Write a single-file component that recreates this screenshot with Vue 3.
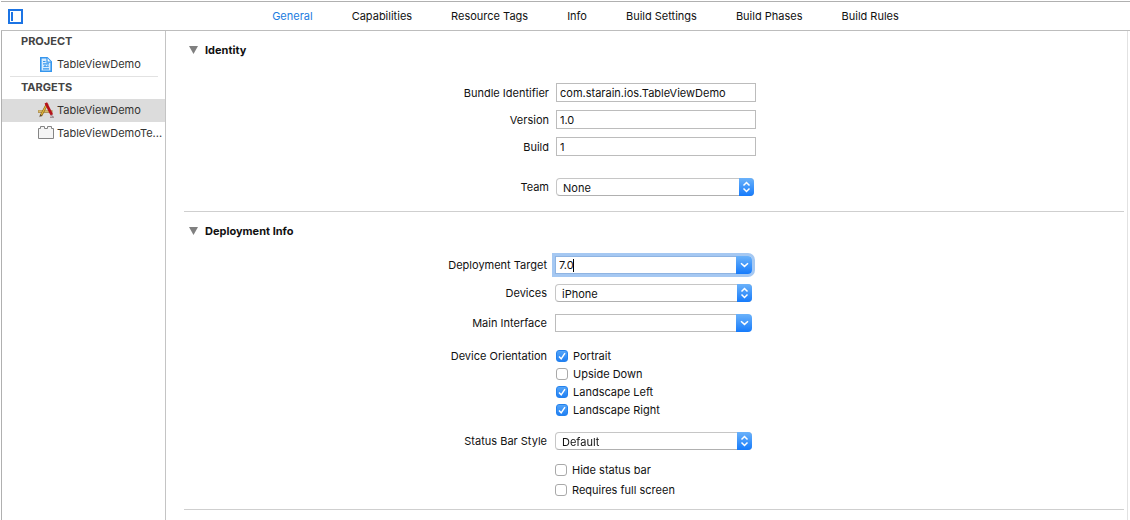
<script setup>
import { ref, onMounted } from 'vue'

const tabs = ['General', 'Capabilities', 'Resource Tags', 'Info', 'Build Settings', 'Build Phases', 'Build Rules']
const activeTab = ref('General')

const identity = ref([
  { id: 'bundle', label: 'Bundle Identifier', value: 'com.starain.ios.TableViewDemo' },
  { id: 'version', label: 'Version', value: '1.0' },
  { id: 'build', label: 'Build', value: '1' }
])
const team = ref('None')
const target = ref('7.0')
const devices = ref('iPhone')
const mainInterface = ref('')
const orientations = ref([
  { label: 'Portrait', on: true },
  { label: 'Upside Down', on: false },
  { label: 'Landscape Left', on: true },
  { label: 'Landscape Right', on: true }
])
const statusStyle = ref('Default')
const statusOptions = ref([
  { label: 'Hide status bar', on: false },
  { label: 'Requires full screen', on: false }
])

// A steady caret marks the field until the user starts editing it.
const restingCaret = ref(true)
const targetInput = ref(null)
onMounted(() => {
  const el = targetInput.value
  el.focus()
  el.setSelectionRange(el.value.length, el.value.length)
})
</script>

<template>
  <div class="editor">
    <header class="topbar">
      <button class="toggle" type="button" aria-label="Toggle project list">
        <svg width="15" height="15" viewBox="0 0 15 15">
          <rect x="1" y="1" width="13" height="13" fill="#fff" stroke="#1c74e4" stroke-width="2" />
          <rect x="3" y="3" width="2" height="9" fill="#1c74e4" />
        </svg>
      </button>
      <nav class="tabs">
        <button
          v-for="tab in tabs"
          :key="tab"
          type="button"
          class="tab"
          :class="{ active: tab === activeTab }"
          @click="activeTab = tab"
        >{{ tab }}</button>
      </nav>
    </header>

    <div class="body">
      <aside class="sidebar">
        <h2 class="group">PROJECT</h2>
        <a class="item" href="#project">
          <svg class="glyph" width="16" height="16" viewBox="0 0 16 16">
            <path d="M2.8 1.8h6.4l4 4v9.4H2.8z" fill="#d9ecfd" stroke="#3596ee" stroke-width="1.6" />
            <path d="M9 1.8v4.4h4.2" fill="#fff" stroke="#3596ee" stroke-width="1.2" />
            <path d="M5 5.5h2.5M5 7.8h6M5 12.8h6" stroke="#3596ee" stroke-width="1.2" />
            <path d="M5 10.9l2-2 1.6 1.4L10 9l1 1.8z" fill="#3596ee" />
          </svg>
          <span>TableViewDemo</span>
        </a>
        <hr class="line" />
        <h2 class="group">TARGETS</h2>
        <a class="item selected" href="#app-target">
          <svg class="glyph" width="16" height="16" viewBox="0 0 16 16">
            <path d="M0 9.5h14.5" stroke="#a8843c" stroke-width="2.6" />
            <path d="M.5 9.2h13" stroke="#ecd584" stroke-width="1" />
            <path d="M9.4 1.5L2.8 14" stroke="#8c6a22" stroke-width="2.6" />
            <path d="M9.2 2L3.2 13" stroke="#e6b93a" stroke-width="1.2" />
            <path d="M2.2 12.2l-.8 3 2.8-2z" fill="#5a4630" />
            <path d="M7.8 .8l6 12" stroke="#b5121b" stroke-width="2.8" />
            <path d="M13 12.6l2 2.2M12 15.2h4" stroke="#8b7479" stroke-width="1" />
          </svg>
          <span>TableViewDemo</span>
        </a>
        <a class="item" href="#test-target">
          <svg class="glyph" width="16" height="16" viewBox="0 0 16 16">
            <path d="M.5 3.5h2v-2h4v2h3v-2h4v2h2v10H.5z" fill="#f5f5f5" stroke="#858585" />
          </svg>
          <span>TableViewDemoTe...</span>
        </a>
      </aside>

      <main class="content">
        <section class="section identity">
          <h3 class="title">
            <svg width="9" height="8" viewBox="0 0 9 8"><path d="M0 0h9L4.5 8z" fill="#808080" /></svg>
            Identity
          </h3>
          <div v-for="f in identity" :key="f.id" class="row">
            <label class="label" :for="f.id">{{ f.label }}</label>
            <input :id="f.id" v-model="f.value" class="text" type="text" spellcheck="false" />
          </div>
          <div class="row team">
            <label class="label" for="team">Team</label>
            <div class="picker">
              <select id="team" v-model="team"><option>None</option></select>
              <span class="cap">
                <svg width="9" height="12" viewBox="0 0 9 12"><path d="M1.5 4.5l3-3 3 3M1.5 7.5l3 3 3-3" /></svg>
              </span>
            </div>
          </div>
        </section>

        <section class="section deployment">
          <h3 class="title">
            <svg width="9" height="8" viewBox="0 0 9 8"><path d="M0 0h9L4.5 8z" fill="#808080" /></svg>
            Deployment Info
          </h3>
          <div class="row">
            <label class="label" for="target">Deployment Target</label>
            <div class="combo focused" :class="{ resting: restingCaret }">
              <input id="target" ref="targetInput" v-model="target" type="text" @input="restingCaret = false" />
              <span v-if="restingCaret" class="caret"></span>
              <button type="button" class="drop" aria-label="Show deployment targets">
                <svg width="9" height="6" viewBox="0 0 9 6"><path d="M1 1.2l3.5 3.2L8 1.2" /></svg>
              </button>
            </div>
          </div>
          <div class="row devices">
            <label class="label" for="devices">Devices</label>
            <div class="picker">
              <select id="devices" v-model="devices"><option>iPhone</option></select>
              <span class="cap">
                <svg width="9" height="12" viewBox="0 0 9 12"><path d="M1.5 4.5l3-3 3 3M1.5 7.5l3 3 3-3" /></svg>
              </span>
            </div>
          </div>
          <div class="row interface">
            <label class="label" for="interface">Main Interface</label>
            <div class="combo">
              <input id="interface" v-model="mainInterface" type="text" />
              <button type="button" class="drop" aria-label="Show interfaces">
                <svg width="9" height="6" viewBox="0 0 9 6"><path d="M1 1.2l3.5 3.2L8 1.2" /></svg>
              </button>
            </div>
          </div>
          <div class="row orientation" role="group" aria-labelledby="orientation">
            <span id="orientation" class="label">Device Orientation</span>
            <div class="checks">
              <label v-for="o in orientations" :key="o.label" class="check">
                <span class="box">
                  <input v-model="o.on" type="checkbox" />
                  <svg v-if="o.on" width="12" height="12" viewBox="0 0 12 12"><path d="M3 6.4l2.2 2.4L9 3.2" /></svg>
                </span>
                {{ o.label }}
              </label>
            </div>
          </div>
          <div class="row status">
            <label class="label" for="status">Status Bar Style</label>
            <div class="picker">
              <select id="status" v-model="statusStyle"><option>Default</option></select>
              <span class="cap">
                <svg width="9" height="12" viewBox="0 0 9 12"><path d="M1.5 4.5l3-3 3 3M1.5 7.5l3 3 3-3" /></svg>
              </span>
            </div>
          </div>
          <div class="row options">
            <div class="checks loose">
              <label v-for="o in statusOptions" :key="o.label" class="check">
                <span class="box">
                  <input v-model="o.on" type="checkbox" />
                  <svg v-if="o.on" width="12" height="12" viewBox="0 0 12 12"><path d="M3 6.4l2.2 2.4L9 3.2" /></svg>
                </span>
                {{ o.label }}
              </label>
            </div>
          </div>
        </section>
      </main>
    </div>
  </div>
</template>

<style>
html, body { background: #fff; }
body { margin: 0; }
</style>

<style scoped>
.editor, .editor * { box-sizing: border-box; }
.editor {
  display: flex;
  flex-direction: column;
  min-height: 100vh;
  padding: 1px 0 0 1px;
  background: #fff;
  color: #111;
  font: 11px/18px Inter, "Liberation Sans", sans-serif;
}
button, input, select { font: inherit; color: inherit; margin: 0; }
button { border: 0; padding: 0; background: none; }
svg { display: block; flex: none; }

.topbar {
  display: flex;
  align-items: center;
  height: 30px;
  border-top: 1px solid #b0b0b0;
  border-bottom: 1px solid #bdbdbd;
}
.toggle { width: 40px; padding-left: 7px; }
.tabs { flex: 1; display: flex; justify-content: center; gap: 39px; }
.tab.active { color: #1c7ce0; }

.body { flex: 1; display: flex; border-left: 1px solid #b0b0b0; }
.sidebar { width: 164px; border-right: 1px solid #c4c4c4; color: #333; }
.group {
  height: 23px;
  margin: 0;
  padding-left: 19px;
  font-size: 11px;
  font-weight: 700;
  line-height: 22px;
  color: #444;
}
.group:first-child { margin-top: -1px; }
.item {
  display: flex;
  align-items: center;
  gap: 3px;
  height: 23px;
  padding: 0 0 2px 36px;
  color: inherit;
  text-decoration: none;
  white-space: nowrap;
}
.item.selected { background: #dcdcdc; }
.line { height: 1px; margin: 0 7px -1px 8px; border: 0; background: #e2e2e2; }

.content { flex: 1; margin-right: 2px; padding: 0 3px 0 18px; border-right: 1px solid #e2e2e2; }
.section { padding-bottom: 15px; border-bottom: 1px solid #cfcfcf; }
.deployment { padding-bottom: 10px; }
.title {
  display: flex;
  align-items: center;
  gap: 7px;
  margin: 0;
  padding: 10px 0 24px 5px;
  font-size: 11px;
  font-weight: 700;
  line-height: 18px;
  color: #111;
}
.deployment .title { padding-bottom: 16px; }

.row { display: grid; grid-template-columns: calc(50% - 107px) 197px; column-gap: 8px; }
.identity .row { grid-template-columns: calc(50% - 105px) 200px; column-gap: 7px; margin-bottom: 8px; }
.identity .row .label { line-height: 20px; margin-bottom: -1px; }
.identity .team { margin: 22px 0 0; }
.identity .team .label { line-height: 18px; margin-bottom: 0; }
.devices { margin-top: 10px; }
.interface { margin-top: 12px; }
.orientation { margin-top: 15px; }
.status { margin-top: 13px; }
.options { margin-top: 11px; }
.options .checks { grid-column: 2; }
.label { text-align: right; white-space: nowrap; }

.text {
  width: 100%;
  height: 19px;
  padding: 0 3px;
  border: 1px solid #bcbcbc;
  background: #fff;
  outline: 0;
}
.picker { position: relative; height: 18px; }
.identity .picker { width: 198px; }
.picker select {
  appearance: none;
  display: block;
  width: 100%;
  height: 18px;
  padding: 0 20px 2px 6px;
  border: 1px solid #c6c6c6;
  border-bottom-color: #b0b0b0;
  border-radius: 4px;
  background: #fff;
  outline: 0;
}
.cap, .drop {
  display: flex;
  align-items: center;
  justify-content: center;
  height: 18px;
  background: linear-gradient(#6bb2fa, #167bfb);
}
.cap {
  position: absolute;
  top: 0;
  right: 0;
  width: 15px;
  border-radius: 0 4px 4px 0;
  pointer-events: none;
}
.cap path, .drop path, .box path { fill: none; stroke: #fff; stroke-width: 1.5; }
.combo { position: relative; display: flex; height: 18px; border-radius: 0 4px 4px 0; }
.combo input {
  flex: 1;
  min-width: 0;
  height: 18px;
  padding: 0 3px;
  border: 1px solid #bcbcbc;
  border-right: 0;
  background: #fff;
  outline: 0;
}
.drop { width: 16px; border-radius: 0 4px 4px 0; }
.combo.focused { box-shadow: 0 0 0 3px #a5c8f2; }
.combo.focused input { border-color: #8fb4e2; }
.combo.resting input { caret-color: transparent; }
.caret {
  position: absolute;
  top: 3px;
  left: 18px;
  width: 1px;
  height: 13px;
  background: #000;
  pointer-events: none;
}

.checks { display: flex; flex-direction: column; padding-left: 1px; }
.checks.loose { gap: 2px; padding-left: 0; }
.check { display: flex; align-items: center; gap: 5px; white-space: nowrap; }
.box { position: relative; width: 12px; height: 12px; }
.box input {
  appearance: none;
  display: block;
  width: 12px;
  height: 12px;
  border: 1px solid #a9a9a9;
  border-radius: 3px;
  background: #fff;
}
.box input:checked { border-color: #2482ee; background: linear-gradient(#55a5f8, #2080f4); }
.box svg { position: absolute; inset: 0; pointer-events: none; }
</style>
